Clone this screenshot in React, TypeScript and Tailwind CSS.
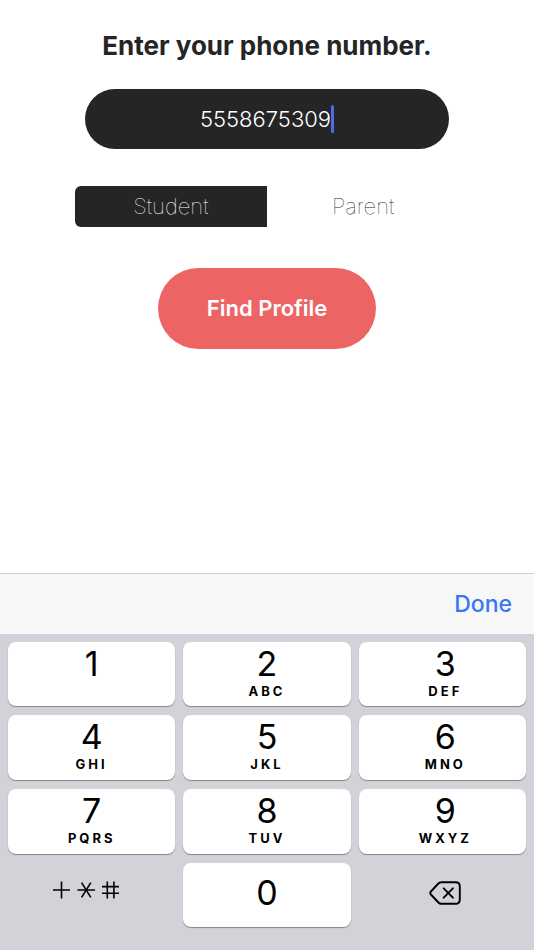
import { useState } from "react";

type Role = "Student" | "Parent";

interface Key {
  digit: string;
  letters: string;
}

const keys: Key[] = [
  { digit: "1", letters: "" },
  { digit: "2", letters: "ABC" },
  { digit: "3", letters: "DEF" },
  { digit: "4", letters: "GHI" },
  { digit: "5", letters: "JKL" },
  { digit: "6", letters: "MNO" },
  { digit: "7", letters: "PQRS" },
  { digit: "8", letters: "TUV" },
  { digit: "9", letters: "WXYZ" },
];

const roles: Role[] = ["Student", "Parent"];

const keyStyle =
  "bg-white rounded-lg shadow-[0_1px_1px_#838488] flex flex-col items-center active:bg-gray-100";

const SymbolsIcon = () => (
  <svg
    width="68"
    height="20"
    viewBox="0 0 68 20"
    fill="none"
    stroke="black"
    strokeWidth="1.6"
    aria-hidden="true"
  >
    <path d="M1 10h17M9.5 1.5v17" />
    <path d="M25.5 10h17.5M29.6 2.6l9.2 14.8M38.8 2.6l-9.2 14.8" />
    <path d="M50 6.6h17M50 13.2h17M55.3 1.5v17M61.9 1.5v17" />
  </svg>
);

const BackspaceIcon = () => (
  <svg
    width="32"
    height="24"
    viewBox="0 0 32 24"
    fill="none"
    stroke="black"
    strokeWidth="1.9"
    strokeLinecap="round"
    strokeLinejoin="round"
    aria-hidden="true"
  >
    <path d="M12.3 1.2H26.5Q30.8 1.2 30.8 5.5V18.5Q30.8 22.8 26.5 22.8H12.3Q10.6 22.8 9.4 21.5L1.9 13.5Q0.5 12 1.9 10.5L9.4 2.5Q10.6 1.2 12.3 1.2Z" />
    <path d="M14.7 7.3l9.2 9.4M23.9 7.3l-9.2 9.4" />
  </svg>
);

const App = () => {
  const [phone, setPhone] = useState("5558675309");
  const [role, setRole] = useState<Role>("Student");

  return (
    <div className="min-h-screen bg-white flex flex-col font-['Inter',sans-serif] antialiased text-[#252525]">
      <main className="flex flex-col items-center pt-7">
        <h1 className="text-[26px] leading-9 font-bold">
          Enter your phone number.
        </h1>

        {/* Phone field */}
        <label className="mt-[25px] w-[68%] h-15 rounded-full bg-[#252525] flex items-center justify-center cursor-text">
          <input
            type="tel"
            aria-label="Phone number"
            value={phone}
            onChange={(e) => setPhone(e.target.value)}
            className="field-sizing-content bg-transparent text-white text-[22px] leading-7 font-light caret-transparent outline-none"
          />
          <span className="w-[3px] h-7 rounded-full bg-[#4a6df0]" />
        </label>

        {/* Student / Parent switch */}
        <fieldset className="mt-[37px] w-[72%] h-[41px] flex rounded-md overflow-hidden">
          {roles.map((item) => (
            <label
              key={item}
              className={`relative flex-1 flex items-center justify-center text-[22px] font-thin cursor-pointer ${
                role === item ? "bg-[#252525] text-white" : "text-[#252525]"
              }`}
            >
              <input
                type="radio"
                name="role"
                checked={role === item}
                onChange={() => setRole(item)}
                className="sr-only"
              />
              {item}
            </label>
          ))}
        </fieldset>

        <button className="mt-[41px] w-[41%] h-[81px] rounded-full bg-[#ed6464] text-white text-[22px] font-semibold">
          Find Profile
        </button>
      </main>

      {/* Keyboard */}
      <div className="mt-auto">
        <div className="h-[61px] px-[22px] bg-[#f7f7f7] border-t border-[#d2d2d4] flex items-center justify-end">
          <button className="text-[#3478f6] text-[23px] font-medium">Done</button>
        </div>

        <div className="bg-[#d1d3d9] px-2 pt-2 pb-[23px] grid grid-cols-3 grid-rows-[64px_65px_65px_64px] gap-x-2 gap-y-[9px] text-black">
          {keys.map(({ digit, letters }) => (
            <button
              key={digit}
              onClick={() => setPhone((phone) => phone + digit)}
              className={`${keyStyle} pt-0.5 nth-[3n]:pl-1.5`}
            >
              <span className="text-[34px] leading-10">{digit}</span>
              <span className="text-[13px] leading-[14px] font-bold tracking-[3px]">
                {letters}
              </span>
            </button>
          ))}
          <button
            aria-label="Symbols"
            className="flex items-center justify-center pr-3 pb-2.5"
          >
            <SymbolsIcon />
          </button>
          <button
            onClick={() => setPhone((phone) => phone + "0")}
            className={`${keyStyle} justify-center pb-1`}
          >
            <span className="text-[34px] leading-10">0</span>
          </button>
          <button
            aria-label="Delete"
            onClick={() => setPhone((phone) => phone.slice(0, -1))}
            className="flex items-center justify-center pl-1.5 pb-1"
          >
            <BackspaceIcon />
          </button>
        </div>
      </div>
    </div>
  );
};

export default App;
